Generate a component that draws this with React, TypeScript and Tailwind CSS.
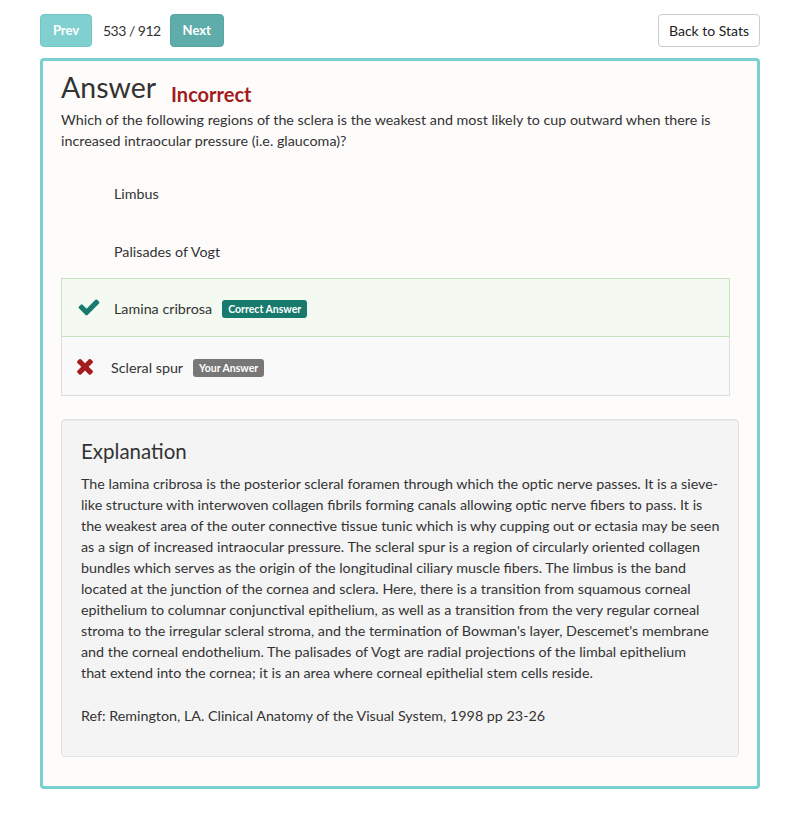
import React from "react";

const CHECK =
  "M1671 566q0 40-28 68l-724 724-136 136q-28 28-68 28t-68-28l-136-136-362-362q-28-28-28-68t28-68l136-136q28-28 68-28t68 28l294 295 656-657q28-28 68-28t68 28l136 136q28 28 28 68z";
const TIMES =
  "M1490 1322q0 40-28 68l-136 136q-28 28-68 28t-68-28l-294-294-294 294q-28 28-68 28t-68-28l-136-136q-28-28-28-68t28-68l294-294-294-294q-28-28-28-68t28-68l136-136q28-28 68-28t68 28l294 294 294-294q28-28 68-28t68 28l136 136q28 28 28 68t-28 68l-294 294 294 294q28 28 28 68z";

function Icon({ d, className }: { d: string; className: string }) {
  return (
    <svg viewBox="0 0 1792 1792" className={className} fill="currentColor">
      <path d={d} />
    </svg>
  );
}

type Option = {
  label: string;
  kind: "plain" | "correct" | "wrong";
};

const options: Option[] = [
  { label: "Limbus", kind: "plain" },
  { label: "Palisades of Vogt", kind: "plain" },
  { label: "Lamina cribrosa", kind: "correct" },
  { label: "Scleral spur", kind: "wrong" },
];

function OptionRow({ opt }: { opt: Option }) {
  const rowCls =
    opt.kind === "correct"
      ? "h-[59px] pt-[3px] bg-[#f4faf1] border border-[#c6e3bd]"
      : opt.kind === "wrong"
      ? "h-[59px] pt-[4px] bg-[#f9f9f9] border border-[#dddddd] border-t-0"
      : "h-[58px] pt-[6px] border border-transparent";
  return (
    <div className={`flex items-center pl-[16px] ${rowCls}`}>
      {opt.kind === "wrong" ? (
        <Icon d={TIMES} className="w-[24px] h-[24px] -ml-[5px] text-[#a51c1c] mr-[14px] -mt-[4px]" />
      ) : (
        <Icon
          d={CHECK}
          className={`w-[24px] h-[24px] -ml-[1px] mr-[13px] -mt-[4px] ${
            opt.kind === "correct" ? "text-[#177a6c]" : "text-[#fdfcfb]"
          }`}
        />
      )}
      <span className="text-[14.3px] text-[#333]">{opt.label}</span>
      {opt.kind === "correct" && (
        <span className="ml-[10px] rounded-[3px] bg-[#177a6c] px-[6px] py-[1px] text-[10.5px] font-bold text-white leading-[16px]">
          Correct Answer
        </span>
      )}
      {opt.kind === "wrong" && (
        <span className="ml-[10px] rounded-[3px] bg-[#777777] px-[6px] py-[1px] text-[10.5px] font-bold text-white leading-[16px]">
          Your Answer
        </span>
      )}
    </div>
  );
}

export default function App() {
  return (
    <div
      className="min-h-screen bg-white px-[40px] pt-[14px] pb-[25px] text-[#333]"
      style={{ fontFamily: "Lato, 'Open Sans', sans-serif" }}
    >
      <div className="flex items-center">
        <button className="h-[33px] w-[52px] rounded-[4px] border border-[#72c7c7] bg-[#80d0d0] text-[13px] font-bold text-white">
          Prev
        </button>
        <span className="ml-[11px] mr-[9px] text-[14px] tracking-[-0.5px] text-[#333]">533 / 912</span>
        <button className="h-[33px] w-[54px] rounded-[4px] border border-[#58a5a2] bg-[#5fadaa] text-[13px] font-bold text-white">
          Next
        </button>
        <button className="ml-auto h-[33px] w-[102px] rounded-[4px] border border-[#cccccc] bg-white text-[14px] text-[#222]">
          Back to Stats
        </button>
      </div>

      <div className="mt-[11px] rounded-[4px] border-[3px] border-[#7acfcf] bg-[#fdfcfb] px-[18px] pt-[8px] pb-[29px]">
        <div className="flex items-end">
          <h1 className="text-[28.5px] leading-[36px] text-[#333]">Answer</h1>
          <span className="ml-[15px] mb-[-3px] text-[20px] font-bold leading-[28px] text-[#a31b1b]">
            Incorrect
          </span>
        </div>
        <p className="mt-[4px] text-[14.3px] leading-[21px] text-[#333]">
          Which of the following regions of the sclera is the weakest and most likely to cup outward when there is
          increased intraocular pressure (i.e. glaucoma)?
        </p>

        <div className="mt-[11px] mr-[9px]">
          {options.map((o) => (
            <OptionRow key={o.label} opt={o} />
          ))}
        </div>

        <div className="mt-[23px] rounded-[4px] border border-[#e3e3e3] bg-[#f4f4f4] pl-[19px] pr-[17px] pt-[18px] pb-[30px] shadow-[inset_0_1px_1px_rgba(0,0,0,0.05)]">
          <h2 className="text-[20.5px] leading-[26px] text-[#333]">Explanation</h2>
          <p className="mt-[9px] text-[14.3px] leading-[21px] text-[#333]">
            The lamina cribrosa is the posterior scleral foramen through which the optic nerve passes. It is a sieve-like
            structure with interwoven collagen fibrils forming canals allowing optic nerve fibers to pass. It is the
            weakest area of the outer connective tissue tunic which is why cupping out or ectasia may be seen as a sign of
            increased intraocular pressure. The scleral spur is a region of circularly oriented collagen bundles which
            serves as the origin of the longitudinal ciliary muscle fibers. The limbus is the band located at the junction
            of the cornea and sclera. Here, there is a transition from squamous corneal epithelium to columnar
            conjunctival epithelium, as well as a transition from the very regular corneal stroma to the irregular
            scleral stroma, and the termination of Bowman's layer, Descemet's membrane and the corneal endothelium. The
            palisades of Vogt are radial projections of the limbal epithelium
            <br />
            that extend into the cornea; it is an area where corneal epithelial stem cells reside.
          </p>
          <p className="mt-[22px] text-[14.3px] leading-[21px] text-[#333]">
            Ref: Remington, LA. Clinical Anatomy of the Visual System, 1998 pp 23-26
          </p>
        </div>
      </div>
    </div>
  );
}
